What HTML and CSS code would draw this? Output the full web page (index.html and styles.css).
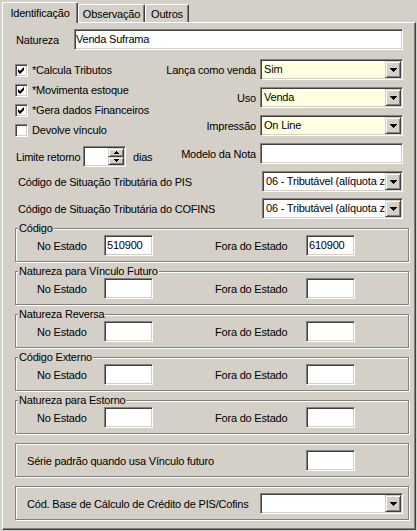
FILE: index.html
```html
<!DOCTYPE html>
<html lang="pt">
<head>
<meta charset="utf-8">
<title>Natureza</title>
<link rel="stylesheet" href="styles.css">
</head>
<body>
<div class="tabs">
  <div class="tab active w1">Identificação</div>
  <div class="tab w2">Observação</div>
  <div class="tab w3">Outros</div>
</div>
<div class="panel">
  <div class="nat-row">
    <span class="nat-lbl">Natureza</span>
    <div class="sunken field nat-inp">Venda Suframa</div>
  </div>

  <div class="section">
    <div class="left">
      <div class="check-row"><span class="sunken checkbox"><svg width="11" height="11" viewBox="0 0 11 11"><path d="M2 4L4 6L8 2L8 5L4 9L2 7Z"/></svg></span>*Calcula Tributos</div>
      <div class="check-row"><span class="sunken checkbox"><svg width="11" height="11" viewBox="0 0 11 11"><path d="M2 4L4 6L8 2L8 5L4 9L2 7Z"/></svg></span>*Movimenta estoque</div>
      <div class="check-row"><span class="sunken checkbox"><svg width="11" height="11" viewBox="0 0 11 11"><path d="M2 4L4 6L8 2L8 5L4 9L2 7Z"/></svg></span>*Gera dados Financeiros</div>
      <div class="check-row"><span class="sunken checkbox"></span>Devolve vínculo</div>
      <div class="limit-row">
        <span class="limit-lbl">Limite retorno</span>
        <div class="sunken spin">
          <span class="spin-field"></span>
          <span class="spin-btns">
            <span class="raised spin-btn"><svg width="5" height="3" viewBox="0 0 5 3"><path d="M2 0h1v1h1v1h1v1h-5v-1h1v-1h1z"/></svg></span>
            <span class="raised spin-btn"><svg width="5" height="3" viewBox="0 0 5 3"><path d="M0 0h5v1h-1v1h-1v1h-1v-1h-1v-1h-1z"/></svg></span>
          </span>
        </div>
        <span class="dias">dias</span>
      </div>
    </div>

    <div class="right">
      <span class="r-lbl">Lança como venda</span>
      <div class="sunken combo yellow"><span class="combo-text">Sim</span><span class="raised combo-btn"><svg width="7" height="4" viewBox="0 0 7 4"><path d="M0 0h7v1h-1v1h-1v1h-1v1h-1v-1h-1v-1h-1v-1h-1z"/></svg></span></div>
      <span class="r-lbl">Uso</span>
      <div class="sunken combo yellow"><span class="combo-text">Venda</span><span class="raised combo-btn"><svg width="7" height="4" viewBox="0 0 7 4"><path d="M0 0h7v1h-1v1h-1v1h-1v1h-1v-1h-1v-1h-1v-1h-1z"/></svg></span></div>
      <span class="r-lbl">Impressão</span>
      <div class="sunken combo yellow"><span class="combo-text">On Line</span><span class="raised combo-btn"><svg width="7" height="4" viewBox="0 0 7 4"><path d="M0 0h7v1h-1v1h-1v1h-1v1h-1v-1h-1v-1h-1v-1h-1z"/></svg></span></div>
      <span class="r-lbl">Modelo da Nota</span>
      <div class="sunken field r-inp"></div>
    </div>
  </div>

  <div class="cst-row first">
    <span>Código de Situação Tributária do PIS</span>
    <div class="sunken combo cst"><span class="combo-text">06 - Tributável (alíquota z</span><span class="raised combo-btn"><svg width="7" height="4" viewBox="0 0 7 4"><path d="M0 0h7v1h-1v1h-1v1h-1v1h-1v-1h-1v-1h-1v-1h-1z"/></svg></span></div>
  </div>
  <div class="cst-row second">
    <span>Código de Situação Tributária do COFINS</span>
    <div class="sunken combo cst"><span class="combo-text">06 - Tributável (alíquota z</span><span class="raised combo-btn"><svg width="7" height="4" viewBox="0 0 7 4"><path d="M0 0h7v1h-1v1h-1v1h-1v1h-1v-1h-1v-1h-1v-1h-1z"/></svg></span></div>
  </div>

  <div class="groups">
    <div class="group">
      <span class="legend">Código</span>
      <div class="g-row">
        <span class="lbl1">No Estado</span><div class="sunken field g-inp">510900</div>
        <span class="lbl2">Fora do Estado</span><div class="sunken field g-inp">610900</div>
      </div>
    </div>
    <div class="group">
      <span class="legend">Natureza para Vínculo Futuro</span>
      <div class="g-row">
        <span class="lbl1">No Estado</span><div class="sunken field g-inp"></div>
        <span class="lbl2">Fora do Estado</span><div class="sunken field g-inp"></div>
      </div>
    </div>
    <div class="group">
      <span class="legend">Natureza Reversa</span>
      <div class="g-row">
        <span class="lbl1">No Estado</span><div class="sunken field g-inp"></div>
        <span class="lbl2">Fora do Estado</span><div class="sunken field g-inp"></div>
      </div>
    </div>
    <div class="group">
      <span class="legend">Código Externo</span>
      <div class="g-row">
        <span class="lbl1">No Estado</span><div class="sunken field g-inp"></div>
        <span class="lbl2">Fora do Estado</span><div class="sunken field g-inp"></div>
      </div>
    </div>
    <div class="group">
      <span class="legend">Natureza para Estorno</span>
      <div class="g-row">
        <span class="lbl1">No Estado</span><div class="sunken field g-inp"></div>
        <span class="lbl2">Fora do Estado</span><div class="sunken field g-inp"></div>
      </div>
    </div>
    <div class="group plain">
      <div class="g-row wide">
        <span class="serie-lbl">Série padrão quando usa Vínculo futuro</span><div class="sunken field g-inp"></div>
      </div>
    </div>
    <div class="group plain">
      <div class="g-row wide">
        <span class="base-lbl">Cód. Base de Cálculo de Crédito de PIS/Cofins</span>
        <div class="sunken combo base"><span class="combo-text"></span><span class="raised combo-btn"><svg width="7" height="4" viewBox="0 0 7 4"><path d="M0 0h7v1h-1v1h-1v1h-1v1h-1v-1h-1v-1h-1v-1h-1z"/></svg></span></div>
      </div>
    </div>
  </div>
</div>
</body>
</html>
```

FILE: styles.css
```css
* { box-sizing: border-box; }
html, body { margin: 0; padding: 0; }
body {
  width: 417px;
  height: 531px;
  overflow: hidden;
  background: #d4d0c8;
  font-family: "Liberation Sans", Arial, sans-serif;
  font-size: 11px;
  letter-spacing: -0.2px;
  color: #000;
  white-space: nowrap;
}
svg { display: block; fill: #000; }

/* Tabs */
.tabs {
  display: flex;
  align-items: flex-end;
  height: 22px;
  padding-left: 2px;
}
.tab {
  height: 18px;
  display: flex;
  align-items: center;
  justify-content: center;
  padding-top: 1px;
  border-top: 1px solid #fff;
  border-left: 1px solid #fff;
  border-right: 1px solid #404040;
  border-radius: 2px 2px 0 0;
  box-shadow: inset -1px 0 #808080;
}
.tab.active {
  height: 21px;
  margin-bottom: -1px;
  padding-top: 0;
  padding-bottom: 1px;
  position: relative;
  z-index: 1;
  background: #d4d0c8;
}
.w1 { width: 76px; }
.w2 { width: 67px; }
.w3 { width: 44px; }

/* Panel */
.panel {
  height: 508px;
  margin: 0 1px 0 2px;
  border: 1px solid;
  border-color: #fff #404040 #404040 #fff;
  box-shadow: inset -1px -1px #808080;
}

/* 3D primitives */
.sunken {
  border: 1px solid;
  border-color: #808080 #fff #fff #808080;
  box-shadow: inset 1px 1px #404040, inset -1px -1px #d4d0c8;
  background: #fff;
}
.raised {
  background: #d4d0c8;
  border: 1px solid;
  border-color: #d4d0c8 #404040 #404040 #d4d0c8;
  box-shadow: inset 1px 1px #fff, inset -1px -1px #808080;
}
.field {
  height: 21px;
  padding: 0 2px;
  line-height: 19px;
  overflow: hidden;
}
.combo {
  display: flex;
  height: 21px;
  padding: 1px;
}
.combo.yellow { background: #ffffe1; }
.combo-text {
  flex: 1;
  padding-left: 2px;
  line-height: 17px;
  overflow: hidden;
}
.combo-btn {
  flex: none;
  width: 16px;
  height: 17px;
  display: flex;
  align-items: center;
  justify-content: center;
}

/* Natureza row */
.nat-row {
  display: flex;
  align-items: center;
  height: 21px;
  margin-top: 6px;
  padding-left: 13px;
}
.nat-lbl { width: 58px; }
.nat-inp { width: 329px; padding-left: 1px; }

/* Two-column section */
.section {
  display: flex;
  justify-content: space-between;
  align-items: flex-start;
}
.left {
  margin-left: 12px;
  margin-top: 10px;
}
.check-row {
  display: flex;
  align-items: center;
  height: 20px;
}
.checkbox {
  flex: none;
  width: 13px;
  height: 13px;
  margin-right: 4px;
}
.limit-row {
  display: flex;
  align-items: center;
  height: 21px;
  margin-top: 6px;
  padding-left: 1px;
}
.limit-lbl { width: 67px; flex: none; }
.spin {
  display: flex;
  flex: none;
  width: 43px;
  height: 21px;
  padding: 1px;
}
.spin-field { flex: 1; }
.spin-btns {
  display: flex;
  flex-direction: column;
  width: 16px;
}
.spin-btn {
  flex: 1;
  display: flex;
  align-items: center;
  justify-content: center;
}
.dias { margin-left: 7px; }

.right {
  margin-top: 9px;
  margin-right: 12px;
  display: grid;
  grid-template-columns: auto 143px;
  column-gap: 4px;
  row-gap: 7px;
  align-items: center;
}
.r-lbl { justify-self: end; }
.r-inp { width: 143px; }

/* CST rows */
.cst-row {
  display: flex;
  align-items: center;
  justify-content: space-between;
  height: 21px;
  margin: 0 12px 0 15px;
}
.cst-row.first { margin-top: 4px; }
.cst-row.second { margin-top: 6px; }
.combo.cst { width: 141px; }

/* Group boxes */
.groups {
  display: flex;
  flex-direction: column;
  gap: 9px;
  margin: 9px 6px 0 12px;
}
.group {
  height: 34px;
  border: 1px solid #808080;
  box-shadow: inset 1px 1px #fff, 1px 1px #fff;
}
.group.plain { padding-top: 6px; }
.legend {
  display: block;
  width: max-content;
  margin: -7px 0 0 2px;
  padding: 0 1px;
  line-height: 13px;
  background: #d4d0c8;
}
.g-row {
  display: flex;
  align-items: center;
  height: 21px;
  padding-left: 21px;
}
.g-row.wide { padding-left: 11px; }
.lbl1 { width: 67px; }
.lbl2 { width: 91px; margin-left: 62px; }
.g-inp { width: 49px; }
.serie-lbl { width: 279px; }
.base-lbl { width: 233px; }
.combo.base { width: 143px; }
```
